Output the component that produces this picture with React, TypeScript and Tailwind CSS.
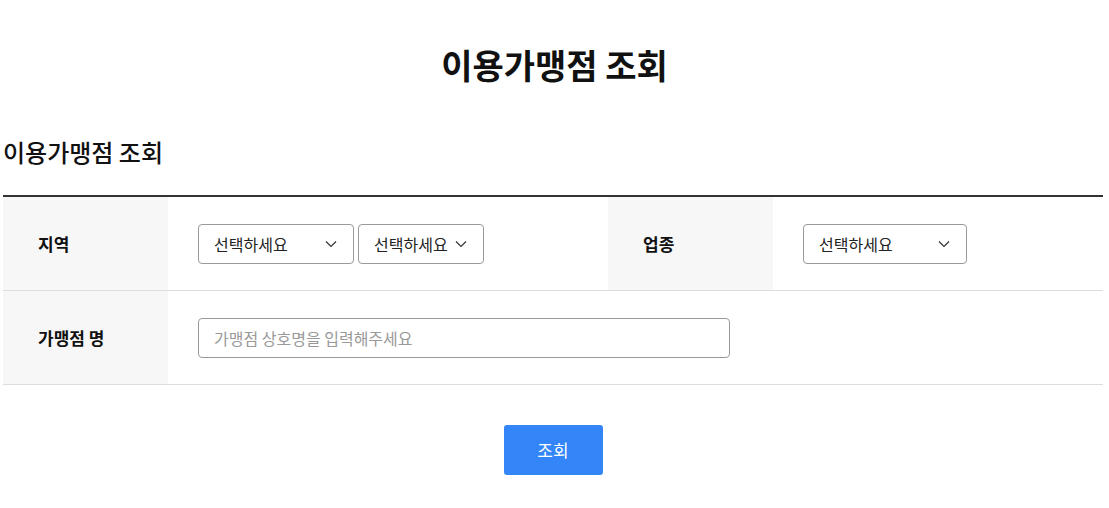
const font = { fontFamily: '"Noto Sans CJK KR", "Noto Sans", sans-serif' };

function Chevron() {
  return (
    <svg
      className="pointer-events-none absolute right-[17px] top-1/2 -translate-y-1/2"
      width="12"
      height="7"
      viewBox="0 0 12 7"
      fill="none"
    >
      <path d="M1 1l5 5 5-5" stroke="#333" strokeWidth="1.2" />
    </svg>
  );
}

function Select({ width }: { width: string }) {
  return (
    <div className={`relative ${width}`}>
      <select className="h-10 w-full appearance-none rounded-[4px] border border-[#999] bg-white pl-[15px] pr-8 text-[16px] text-[#222] outline-none">
        <option>선택하세요</option>
      </select>
      <Chevron />
    </div>
  );
}

export default function App() {
  return (
    <div className="min-h-[508px] bg-white text-[#111]" style={font}>
      <h1 className="pt-[41px] text-center text-[34px] font-bold leading-[48px]">
        이용가맹점 조회
      </h1>
      <div className="ml-[3px] w-[1100px]">
        <h2 className="mt-[46px] text-[24px] font-medium leading-[34px]">
          이용가맹점 조회
        </h2>
        <div className="mt-[26px] border-t-2 border-[#333]">
          <div className="flex h-[94px] border-b border-[#ddd]">
            <div className="flex w-[165px] items-center bg-[#f7f7f7] pl-[35px] text-[17px] font-bold">
              지역
            </div>
            <div className="flex w-[440px] items-center gap-1 pl-[30px]">
              <Select width="w-[156px]" />
              <Select width="w-[126px]" />
            </div>
            <div className="flex w-[165px] items-center bg-[#f7f7f7] pl-[35px] text-[17px] font-bold">
              업종
            </div>
            <div className="flex flex-1 items-center pl-[30px]">
              <Select width="w-[164px]" />
            </div>
          </div>
          <div className="flex h-[94px] border-b border-[#ddd]">
            <div className="flex w-[165px] items-center bg-[#f7f7f7] pl-[35px] text-[17px] font-bold">
              가맹점 명
            </div>
            <div className="flex flex-1 items-center pl-[30px]">
              <input
                className="h-10 w-[532px] rounded-[4px] border border-[#999] px-[15px] text-[16px] outline-none placeholder:text-[#999]"
                placeholder="가맹점 상호명을 입력해주세요"
              />
            </div>
          </div>
        </div>
        <div className="mt-10 flex justify-center">
          <button className="h-[50px] w-[99px] rounded-[3px] bg-[#3385f8] text-[17px] text-white">
            조회
          </button>
        </div>
      </div>
    </div>
  );
}
